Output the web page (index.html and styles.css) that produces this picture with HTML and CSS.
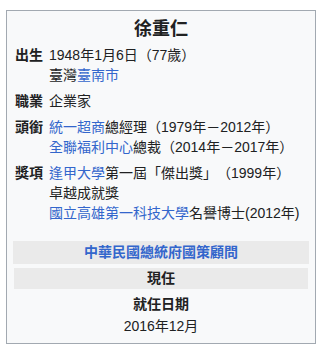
FILE: index.html
```html
<!DOCTYPE html>
<html lang="zh-Hant">
<head>
<meta charset="utf-8">
<link rel="stylesheet" href="styles.css">
</head>
<body>
<div class="infobox">
  <div class="title">徐重仁</div>
  <div class="rows">
    <div class="row">
      <div class="label">出生</div>
      <div class="data">1948年1月6日（77歲）<br>臺灣<a class="link">臺南市</a></div>
    </div>
    <div class="row">
      <div class="label">職業</div>
      <div class="data">企業家</div>
    </div>
    <div class="row">
      <div class="label">頭銜</div>
      <div class="data"><a class="link">統一超商</a>總經理（1979年－2012年）<br><a class="link">全聯福利中心</a>總裁（2014年－2017年）</div>
    </div>
    <div class="row">
      <div class="label">獎項</div>
      <div class="data"><a class="link">逢甲大學</a>第一屆「傑出獎」（1999年）<br>卓越成就獎<br><a class="link">國立高雄第一科技大學</a>名譽博士(2012年)</div>
    </div>
  </div>
  <div class="office"><a class="link">中華民國總統府國策顧問</a></div>
  <div class="current">現任</div>
  <div class="term-label">就任日期</div>
  <div class="term-value">2016年12月</div>
</div>
</body>
</html>
```

FILE: styles.css
```css
body {
  margin: 0;
  font-family: "Liberation Sans", "Noto Sans CJK TC", sans-serif;
  font-size: 14px;
  color: #202122;
  background: #ffffff;
  text-spacing-trim: space-all;
}
.infobox {
  margin: 10px 0 0 6px;
  width: 310px;
  box-sizing: border-box;
  border: 1px solid #a2a9b1;
  background: #f8f9fa;
  padding: 0 0 7px;
}
.title {
  text-align: center;
  font-weight: bold;
  font-size: 18px;
  line-height: 24px;
  padding-top: 6px;
}
.rows {
  margin-top: 1px;
  padding: 0 8px;
}
.row {
  display: grid;
  grid-template-columns: 34px 1fr;
  padding: 3px 0;
  line-height: 20px;
}
.label {
  font-weight: bold;
}
.link {
  color: #3366cc;
  text-decoration: none;
}
.office {
  margin: 15px 6px 0;
  height: 23px;
  line-height: 23px;
  background: #eaeaea;
  text-align: center;
  font-weight: bold;
}
.current {
  margin: 4px 7px 0;
  height: 21px;
  line-height: 21px;
  background: #eaeaea;
  text-align: center;
  font-weight: bold;
}
.term-label {
  margin-top: 5px;
  line-height: 20px;
  text-align: center;
  font-weight: bold;
}
.term-value {
  margin-top: 2px;
  line-height: 20px;
  text-align: center;
}
```
